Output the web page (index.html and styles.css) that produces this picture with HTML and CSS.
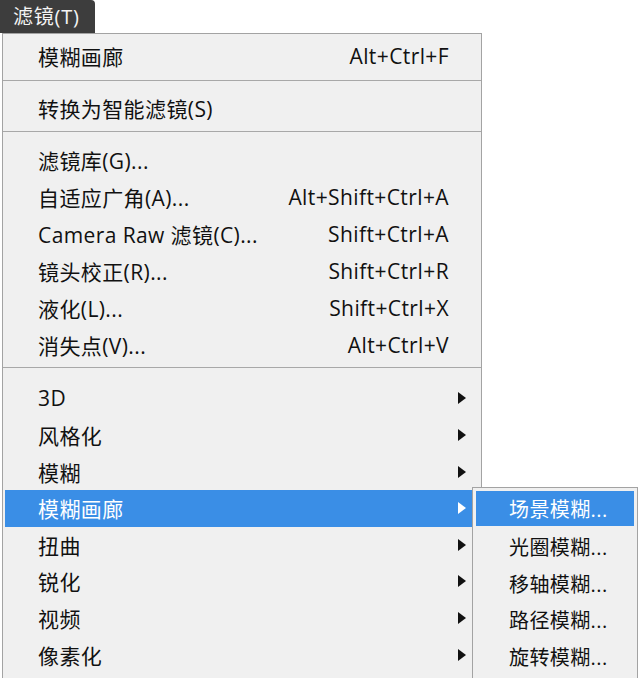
FILE: index.html
```html
<!DOCTYPE html>
<html lang="zh-CN">
<head>
<meta charset="utf-8">
<title>滤镜菜单</title>
<link rel="stylesheet" href="styles.css">
</head>
<body>
<div class="screen">
  <div class="tab">滤镜(T)</div>
  <div class="menu">
    <div class="row"><span class="label">模糊画廊</span><span class="key">Alt+Ctrl+F</span><span class="sub"></span></div>
    <div class="sep"></div>
    <div class="row"><span class="label">转换为智能滤镜(S)</span><span class="key"></span><span class="sub"></span></div>
    <div class="sep"></div>
    <div class="group">
      <div class="row"><span class="label">滤镜库(G)...</span><span class="key"></span><span class="sub"></span></div>
      <div class="row"><span class="label">自适应广角(A)...</span><span class="key">Alt+Shift+Ctrl+A</span><span class="sub"></span></div>
      <div class="row"><span class="label">Camera Raw 滤镜(C)...</span><span class="key">Shift+Ctrl+A</span><span class="sub"></span></div>
      <div class="row"><span class="label">镜头校正(R)...</span><span class="key">Shift+Ctrl+R</span><span class="sub"></span></div>
      <div class="row"><span class="label">液化(L)...</span><span class="key">Shift+Ctrl+X</span><span class="sub"></span></div>
      <div class="row"><span class="label">消失点(V)...</span><span class="key">Alt+Ctrl+V</span><span class="sub"></span></div>
    </div>
    <div class="sep sep-wide"></div>
    <div class="row"><span class="label">3D</span><span class="key"></span><span class="sub"><i class="arrow"></i></span></div>
    <div class="row"><span class="label">风格化</span><span class="key"></span><span class="sub"><i class="arrow"></i></span></div>
    <div class="row"><span class="label">模糊</span><span class="key"></span><span class="sub"><i class="arrow"></i></span></div>
    <div class="row active"><span class="label">模糊画廊</span><span class="key"></span><span class="sub"><i class="arrow"></i></span>
      <div class="submenu">
        <div class="srow active">场景模糊...</div>
        <div class="srow">光圈模糊...</div>
        <div class="srow">移轴模糊...</div>
        <div class="srow">路径模糊...</div>
        <div class="srow">旋转模糊...</div>
      </div>
    </div>
    <div class="row"><span class="label">扭曲</span><span class="key"></span><span class="sub"><i class="arrow"></i></span></div>
    <div class="row"><span class="label">锐化</span><span class="key"></span><span class="sub"><i class="arrow"></i></span></div>
    <div class="row"><span class="label">视频</span><span class="key"></span><span class="sub"><i class="arrow"></i></span></div>
    <div class="row"><span class="label">像素化</span><span class="key"></span><span class="sub"><i class="arrow"></i></span></div>
  </div>
</div>
</body>
</html>
```

FILE: styles.css
```css
* { box-sizing: border-box; }
html, body {
  margin: 0;
  padding: 0;
  background: #ffffff;
  width: 640px;
  height: 678px;
  overflow: hidden;
}
.screen {
  width: 640px;
  height: 678px;
  overflow: hidden;
  font-family: "Open Sans", "Noto Sans CJK SC", sans-serif;
  font-size: 21px;
  letter-spacing: 0.4px;
  color: #111;
}
.tab {
  width: 95px;
  height: 33px;
  background: #3d3d3d;
  color: #f4f4f4;
  border-top-right-radius: 4px;
  padding-left: 13px;
  line-height: 33px;
  font-size: 20px;
  letter-spacing: 0.8px;
}
.menu {
  position: relative;
  margin-left: 2px;
  width: 480px;
  height: 645px;
  background: #f0f0f0;
  border: 1px solid #a3a3a3;
  border-bottom: none;
  padding: 4px 3px 0 2px;
}
.row {
  position: relative;
  display: flex;
  align-items: center;
  height: 36.6px;
  padding-left: 33px;
  padding-right: 12px;
  white-space: nowrap;
}
.group .row { height: 37px; }
.label { flex: 1; }
.key { text-align: right; }
.sub {
  width: 17px;
  display: flex;
  justify-content: flex-end;
  align-items: center;
}
.arrow {
  display: block;
  width: 0;
  height: 0;
  border-top: 6px solid transparent;
  border-bottom: 6px solid transparent;
  border-left: 8px solid #111;
}
.sep {
  height: 1px;
  background: #a8a8a8;
  margin: 5px -3px 9px -2px;
}
.sep-wide { margin-top: 4px; margin-bottom: 12px; }
.row.active {
  background: #3a8ee6;
  color: #ffffff;
}
.row.active .arrow { border-left-color: #ffffff; }
.submenu {
  position: absolute;
  left: 467px;
  top: -3px;
  width: 166px;
  height: 193px;
  background: #f0f0f0;
  border: 1px solid #a3a3a3;
  padding: 3px;
  color: #111;
  font-size: 20px;
}
.srow {
  height: 36.8px;
  display: flex;
  align-items: center;
  padding-left: 33px;
}
.srow.active {
  background: #3a8ee6;
  color: #ffffff;
  height: 35px;
  margin-bottom: 2px;
}
```
